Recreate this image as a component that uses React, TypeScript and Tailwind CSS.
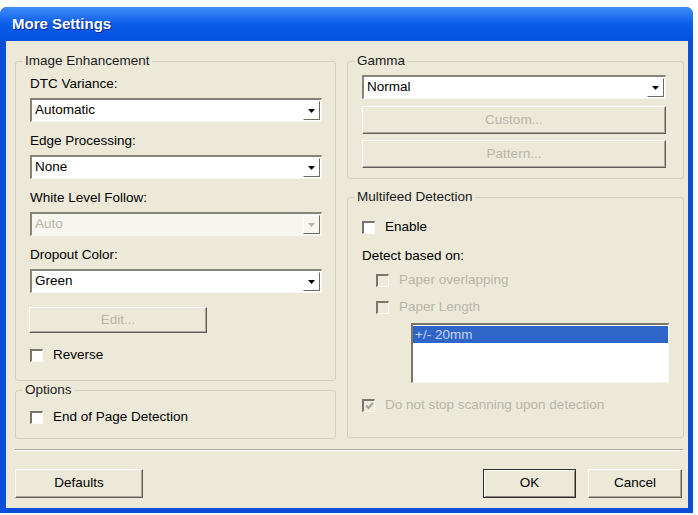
import type { ReactNode } from "react";

const disabledText = "text-[#b8b5a8]";

function Arrow({ faded }: { faded?: boolean }) {
  return (
    <svg width="7" height="4" viewBox="0 0 7 4">
      <path d="M0 0h7L3.5 4z" fill={faded ? "#b8b5a8" : "#000"} />
    </svg>
  );
}

function Combo({ value, disabled }: { value: string; disabled?: boolean }) {
  return (
    <div
      className={`h-[24px] flex border-t-2 border-l-2 border-t-[#85837a] border-l-[#85837a] border-b border-r border-b-[#f7f6f0] border-r-[#f7f6f0] ${
        disabled ? "bg-[#f6f5ef]" : "bg-white"
      }`}
    >
      <div className={`flex-1 pl-[3px] leading-[20px] ${disabled ? disabledText : "text-black"}`}>{value}</div>
      <div className="w-[17px] my-[1px] mr-[1px] flex items-center justify-center border-r border-b border-r-[#6d6b63] border-b-[#6d6b63] border-t border-l border-t-white border-l-white">
        <Arrow faded={disabled} />
      </div>
    </div>
  );
}

function Btn({
  children,
  disabled,
  primary,
  className = "",
}: {
  children: ReactNode;
  disabled?: boolean;
  primary?: boolean;
  className?: string;
}) {
  return (
    <div
      className={`flex items-center justify-center bg-[#ece9d8] ${
        primary
          ? "border border-[#2e2d29] shadow-[inset_1px_1px_0_#ffffff,inset_-1px_-1px_0_#8d8b82]"
          : "border-t border-l border-t-white border-l-white border-b border-r border-b-[#5f5d56] border-r-[#5f5d56] shadow-[inset_-1px_-1px_0_#aca899]"
      } ${disabled ? disabledText : "text-black"} ${className}`}
    >
      {children}
    </div>
  );
}

function Check({ checked, disabled }: { checked?: boolean; disabled?: boolean }) {
  return (
    <span
      className={`w-[13px] h-[13px] shrink-0 flex items-center justify-center border-t-2 border-l-2 border-t-[#77756d] border-l-[#77756d] border-b border-r border-b-[#fbfaf6] border-r-[#fbfaf6] ${
        disabled ? "bg-[#eeebdd]" : "bg-white"
      }`}
    >
      {checked && (
        <svg width="9" height="8" viewBox="0 0 9 8">
          <path d="M1 3.5l2.5 2.5L8 1" stroke={disabled ? "#a7a498" : "#000"} strokeWidth="2" fill="none" />
        </svg>
      )}
    </span>
  );
}

function CheckRow({
  label,
  checked,
  disabled,
  className = "",
}: {
  label: string;
  checked?: boolean;
  disabled?: boolean;
  className?: string;
}) {
  return (
    <div className={`flex items-center gap-[10px] h-4 ${className}`}>
      <Check checked={checked} disabled={disabled} />
      <span className={disabled ? disabledText : "text-black"}>{label}</span>
    </div>
  );
}

function Group({ title, className = "", children }: { title: string; className?: string; children: ReactNode }) {
  return (
    <fieldset className={`border border-[#d0d0bf] rounded-[3px] ${className}`}>
      <legend className="ml-[7px] px-[2px] leading-4 text-[#1b1b1b]">{title}</legend>
      {children}
    </fieldset>
  );
}

export default function App() {
  return (
    <div
      className="w-[698px] h-[515px] bg-white pt-[7px] text-[13.5px]"
      style={{ fontFamily: '"Liberation Sans", Arial, sans-serif' }}
    >
      <div className="w-[693px] h-[506px] flex flex-col rounded-t-[7px] overflow-hidden bg-[#0b4fd8]">
        {/* Title bar */}
        <div className="h-[34px] shrink-0 flex items-center pl-[12px] bg-gradient-to-b from-[#3f8cf8] via-[#0a5ce9] to-[#0550e0] text-white font-bold text-[15px] [text-shadow:1px_1px_0_#0a2590]">
          More Settings
        </div>

        {/* Body */}
        <div className="flex-1 ml-[6px] mr-[5px] mb-[5px] bg-[#ece9d8] flex flex-col pt-[12px] pl-[9px]">
          <div className="flex gap-[11px]">
            {/* Left column */}
            <div className="w-[321px] flex flex-col">
              <Group title="Image Enhancement" className="h-[328px]">
                <div className="pl-[14px] pr-[13px] pt-[7px]">
                  <div className="leading-4">DTC Variance:</div>
                  <div className="mt-[6px]">
                    <Combo value="Automatic" />
                  </div>
                  <div className="leading-4 mt-[11px]">Edge Processing:</div>
                  <div className="mt-[6px]">
                    <Combo value="None" />
                  </div>
                  <div className="leading-4 mt-[11px]">White Level Follow:</div>
                  <div className="mt-[6px]">
                    <Combo value="Auto" disabled />
                  </div>
                  <div className="leading-4 mt-[11px]">Dropout Color:</div>
                  <div className="mt-[6px]">
                    <Combo value="Green" />
                  </div>
                  <Btn disabled className="mt-[14px] h-[26px] w-[178px] -ml-[1px]">
                    Edit...
                  </Btn>
                  <CheckRow label="Reverse" className="mt-[14px]" />
                </div>
              </Group>
              <Group title="Options" className="h-[57px] mt-[1px]">
                <div className="pl-[14px] pt-[11px]">
                  <CheckRow label="End of Page Detection" />
                </div>
              </Group>
            </div>

            {/* Right column */}
            <div className="w-[337px] flex flex-col">
              <Group title="Gamma" className="h-[126px]">
                <div className="pl-[14px] pr-[17px] pt-[6px]">
                  <Combo value="Normal" />
                  <Btn disabled className="mt-[7px] h-[28px]">
                    Custom...
                  </Btn>
                  <Btn disabled className="mt-[6px] h-[28px]">
                    Pattern...
                  </Btn>
                </div>
              </Group>
              <Group title="Multifeed Detection" className="h-[249px] mt-[10px]">
                <div className="pl-[14px] pt-[14px]">
                  <CheckRow label="Enable" />
                  <div className="leading-4 mt-[13px]">Detect based on:</div>
                  <CheckRow label="Paper overlapping" disabled className="mt-[8px] ml-[14px]" />
                  <CheckRow label="Paper Length" disabled className="mt-[11px] ml-[14px]" />
                  <div className="mt-[8px] ml-[49px] w-[258px] h-[60px] bg-white border-t-2 border-l-2 border-t-[#77756d] border-l-[#77756d] border-b border-r border-b-[#f7f6f0] border-r-[#f7f6f0] pt-[1px]">
                    <div className="h-[17px] bg-[#2f64c9] text-[#c9d4ee] leading-[17px] pl-[2px]">+/- 20mm</div>
                  </div>
                  <CheckRow label="Do not stop scanning upon detection" checked disabled className="mt-[14px]" />
                </div>
              </Group>
            </div>
          </div>

          {/* Separator */}
          <div className="mt-[10px] mr-[5px] border-t border-t-[#aca899] border-b border-b-white" />

          {/* Buttons */}
          <div className="mt-[18px] flex items-center pr-[6px]">
            <Btn className="w-[128px] h-[29px]">Defaults</Btn>
            <div className="flex-1" />
            <Btn primary className="w-[93px] h-[29px]">
              OK
            </Btn>
            <Btn className="w-[94px] h-[29px] ml-[12px]">Cancel</Btn>
          </div>
        </div>
      </div>
    </div>
  );
}
